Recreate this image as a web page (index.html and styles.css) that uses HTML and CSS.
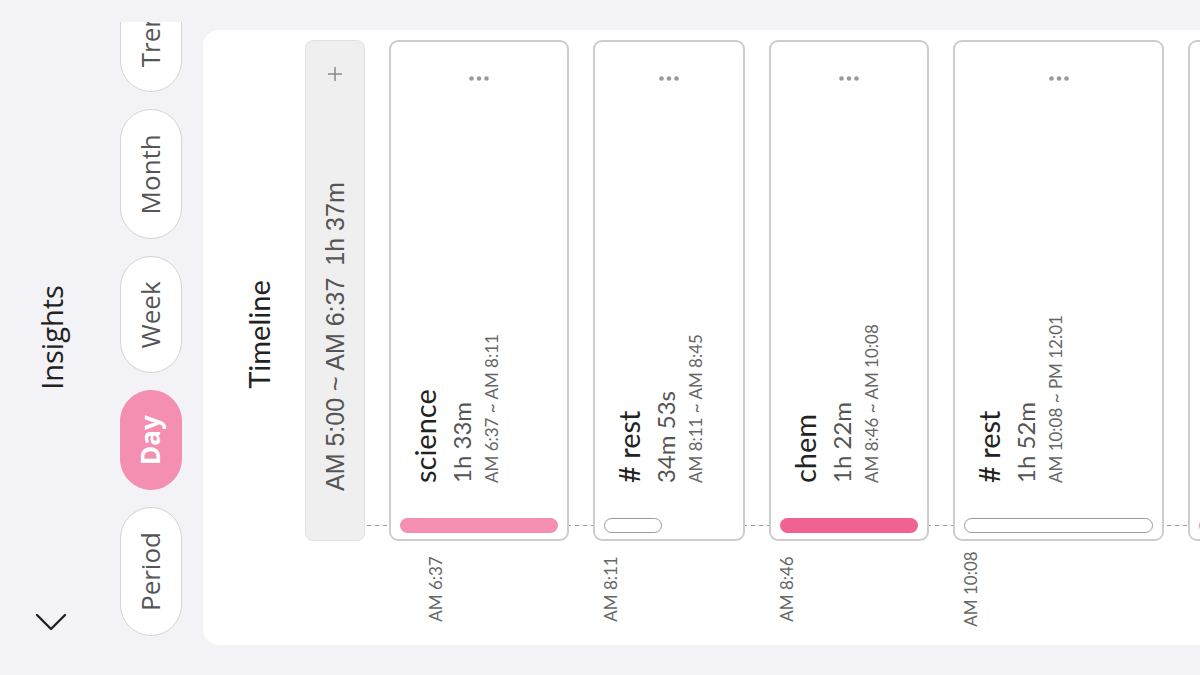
FILE: index.html
```html
<!DOCTYPE html>
<html lang="en">
<head>
<meta charset="utf-8">
<title>Insights</title>
<link rel="stylesheet" href="styles.css">
</head>
<body>
<div class="screen">
  <header class="topbar">
    <button class="back" aria-label="Back">
      <svg width="18" height="32" viewBox="0 0 18 32"><path d="M16 2 L2 16 L16 30" fill="none" stroke="#222" stroke-width="2.4" stroke-linecap="round" stroke-linejoin="round"/></svg>
    </button>
    <h1 class="title">Insights</h1>
    <span></span>
  </header>

  <nav class="tabs">
    <span class="tab">Period</span>
    <span class="tab active">Day</span>
    <span class="tab">Week</span>
    <span class="tab">Month</span>
    <span class="tab">Trends</span>
  </nav>

  <section class="panel">
    <h2 class="panel-title">Timeline</h2>
    <div class="timeline">
      <div class="row">
        <div class="time"></div>
        <div class="gap-block">
          <span>AM 5:00 ~ AM 6:37</span><span class="gap-dur">1h 37m</span>
          <svg class="plus" width="14" height="14" viewBox="0 0 14 14"><path d="M7 0 V14 M0 7 H14" stroke="#8a8a8a" stroke-width="1.5"/></svg>
        </div>
      </div>

      <div class="row">
        <div class="time first">AM 6:37</div>
        <div class="card" style="height:180px">
          <div class="bar science"></div>
          <div class="info">
            <div class="name">science</div>
            <div class="dur">1h 33m</div>
            <div class="range">AM 6:37 ~ AM 8:11</div>
          </div>
          <svg class="more" width="5" height="20" viewBox="0 0 5 20"><circle cx="2.5" cy="2.5" r="2.3"/><circle cx="2.5" cy="10" r="2.3"/><circle cx="2.5" cy="17.5" r="2.3"/></svg>
        </div>
      </div>

      <div class="row">
        <div class="time">AM 8:11</div>
        <div class="card" style="height:152px">
          <div class="bar rest short" style="height:58px"></div>
          <div class="info">
            <div class="name"># rest</div>
            <div class="dur">34m 53s</div>
            <div class="range">AM 8:11 ~ AM 8:45</div>
          </div>
          <svg class="more" width="5" height="20" viewBox="0 0 5 20"><circle cx="2.5" cy="2.5" r="2.3"/><circle cx="2.5" cy="10" r="2.3"/><circle cx="2.5" cy="17.5" r="2.3"/></svg>
        </div>
      </div>

      <div class="row">
        <div class="time">AM 8:46</div>
        <div class="card" style="height:160px">
          <div class="bar chem"></div>
          <div class="info">
            <div class="name">chem</div>
            <div class="dur">1h 22m</div>
            <div class="range">AM 8:46 ~ AM 10:08</div>
          </div>
          <svg class="more" width="5" height="20" viewBox="0 0 5 20"><circle cx="2.5" cy="2.5" r="2.3"/><circle cx="2.5" cy="10" r="2.3"/><circle cx="2.5" cy="17.5" r="2.3"/></svg>
        </div>
      </div>

      <div class="row">
        <div class="time">AM 10:08</div>
        <div class="card" style="height:211px">
          <div class="bar rest"></div>
          <div class="info">
            <div class="name"># rest</div>
            <div class="dur">1h 52m</div>
            <div class="range">AM 10:08 ~ PM 12:01</div>
          </div>
          <svg class="more" width="5" height="20" viewBox="0 0 5 20"><circle cx="2.5" cy="2.5" r="2.3"/><circle cx="2.5" cy="10" r="2.3"/><circle cx="2.5" cy="17.5" r="2.3"/></svg>
        </div>
      </div>

      <div class="row">
        <div class="time"></div>
        <div class="card" style="height:200px">
          <div class="bar science"></div>
        </div>
      </div>
    </div>
  </section>
</div>
</body>
</html>
```

FILE: styles.css
```css
html, body {
  margin: 0;
  padding: 0;
  width: 1200px;
  height: 675px;
  overflow: hidden;
  background: #f2f2f7;
}

/* The app is shown turned a quarter turn counter-clockwise */
.screen {
  width: 675px;
  height: 1200px;
  overflow: hidden;
  background: #f2f2f7;
  transform-origin: 0 0;
  transform: translateY(675px) rotate(-90deg);
  font-family: "Lato", "Open Sans", sans-serif;
  color: #222;
}

.topbar {
  height: 102px;
  display: grid;
  grid-template-columns: 1fr auto 1fr;
  align-items: center;
}

.back {
  justify-self: start;
  margin-left: 44px;
  padding: 0;
  border: 0;
  background: none;
  display: flex;
}

.title {
  margin: 0;
  font-family: "Open Sans", sans-serif;
  font-weight: 400;
  font-size: 29px;
  color: #222;
}

.tabs {
  margin: 18px 22px 0 39px;
  height: 62px;
  display: flex;
  gap: 17px;
  overflow: hidden;
}

.tab {
  flex: none;
  box-sizing: border-box;
  height: 62px;
  padding: 0 24px;
  border: 1.5px solid #d4d4d4;
  border-radius: 31px;
  background: #fff;
  font-family: "Open Sans", sans-serif;
  font-size: 26px;
  line-height: 59px;
  color: #555;
}

.tab.active {
  background: #f48fb1;
  border-color: #f48fb1;
  color: #fff;
  font-weight: 700;
}

.panel {
  margin: 21px 30px 0 30px;
  background: #fff;
  border-radius: 16px;
  padding: 38px 10px 0 16px;
  min-height: 1100px;
}

.panel-title {
  margin: 0 0 28px 0;
  text-align: center;
  font-family: "Lato", sans-serif;
  font-weight: 400;
  font-size: 29px;
  line-height: 36px;
  color: #222;
}

.timeline {
  position: relative;
  display: flex;
  flex-direction: column;
  gap: 24px;
}

.timeline::before {
  content: "";
  position: absolute;
  left: 103px;
  top: 30px;
  bottom: 0;
  width: 1.2px;
  background: repeating-linear-gradient(to bottom, #959595 0 4px, transparent 4px 8px);
}

.row {
  display: flex;
  gap: 8px;
  align-items: flex-start;
}

.time {
  flex: none;
  width: 80px;
  padding-top: 8px;
  text-align: center;
  font-size: 17px;
  line-height: 20px;
  color: #666;
  white-space: nowrap;
}

.time.first {
  padding-top: 37px;
}

.gap-block {
  position: relative;
  flex: 1;
  box-sizing: border-box;
  height: 60px;
  display: flex;
  align-items: center;
  padding: 0 26px 0 49px;
  background: #efefef;
  border: 1.5px solid #e2e2e2;
  border-radius: 8px;
  font-family: "Liberation Sans", Arial, sans-serif;
  font-size: 25px;
  color: #555;
  white-space: nowrap;
}

.gap-dur {
  margin-left: 12px;
}

.plus {
  margin-left: auto;
}

.card {
  position: relative;
  flex: 1;
  box-sizing: border-box;
  display: flex;
  padding: 9px 0 9px 6px;
  background: #fff;
  border: 2px solid #cdcdcd;
  border-radius: 9px;
}

.bar {
  flex: none;
  width: 15px;
  box-sizing: border-box;
  border-radius: 8px;
}

.bar.science { background: #f48fb1; }
.bar.chem { background: #f06292; }
.bar.rest {
  background: #fff;
  border: 1.5px solid #9a9a9a;
}
.bar.short { align-self: flex-start; }

.info {
  flex: 1;
  margin-left: 35px;
  padding-top: 8px;
  white-space: nowrap;
}

.name {
  font-size: 29px;
  line-height: 34px;
  color: #222;
}

.dur {
  margin-top: 5px;
  font-size: 24px;
  line-height: 30px;
  color: #555;
}

.range {
  margin-top: 4px;
  font-size: 17px;
  line-height: 22px;
  color: #666;
}

.more {
  align-self: center;
  margin-right: 34px;
  fill: #9a9a9a;
}
```
